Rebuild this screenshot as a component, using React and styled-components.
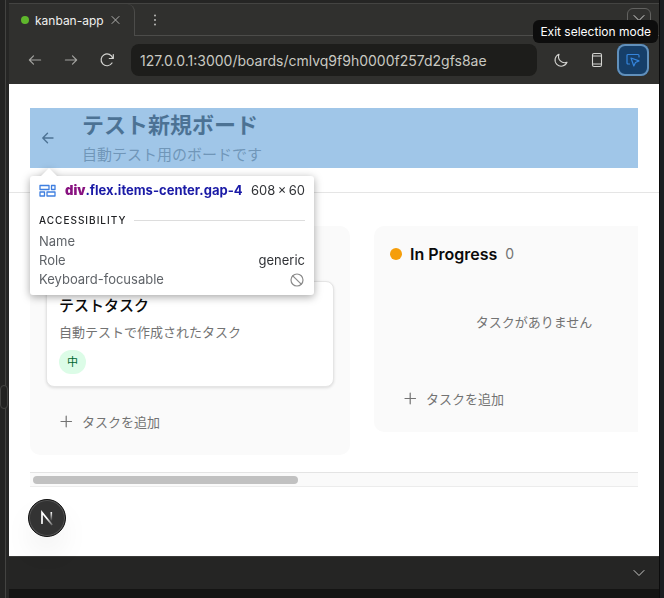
import React from "react";
import styled, { createGlobalStyle } from "styled-components";

const GlobalStyle = createGlobalStyle`
  * {
    box-sizing: border-box;
  }
  body {
    margin: 0;
    background: #252524;
    font-family: Inter, "Noto Sans CJK JP", sans-serif;
  }
  h1, h2, h3, p, dl, dd, dt {
    margin: 0;
  }
  button, input {
    font: inherit;
    border: 0;
    padding: 0;
    background: none;
    color: inherit;
  }
  svg {
    display: block;
    flex: none;
  }
`;

const Icon = ({ size = 16, box = 16, weight = 1, children }) => (
  <svg
    width={size}
    height={size}
    viewBox={`0 0 ${box} ${box}`}
    fill="none"
    stroke="currentColor"
    strokeWidth={weight}
    strokeLinecap="round"
    strokeLinejoin="round"
    aria-hidden="true"
  >
    {children}
  </svg>
);

const ChevronDown = () => (
  <Icon><path d="M3 5.5l5 5 5-5" /></Icon>
);

const Plus = () => (
  <Icon weight={1.2}><path d="M3 8.500h10.500M8.200 3.200v10.600" /></Icon>
);

const columns = [
  {
    id: 1,
    tasks: [{ title: "テストタスク", text: "自動テストで作成されたタスク", priority: "中" }],
  },
  { id: 2, name: "In Progress", color: "#f59e0b", tasks: [] },
];

const Column = ({ name, color, tasks }) => (
  <ColumnBox>
    <ColumnHead>
      {name && (
        <>
          <Dot $size={12} $color={color} />
          <ColumnTitle>{name}</ColumnTitle>
          <Count>{tasks.length}</Count>
        </>
      )}
    </ColumnHead>
    {tasks.map((task) => (
      <Card key={task.title}>
        <CardTitle>{task.title}</CardTitle>
        <CardText>{task.text}</CardText>
        <Priority>{task.priority}</Priority>
      </Card>
    ))}
    {tasks.length === 0 && <Empty>タスクがありません</Empty>}
    <AddButton type="button">
      <Plus />
      タスクを追加
    </AddButton>
  </ColumnBox>
);

const Inspector = () => (
  <InspectorBox>
    <InspectorTop>
      <Icon size={18} box={18} weight={1.3}>
        <path d="M1 3.500h9v4H1zM12.500 3.500H16v4h-3.500zM1 10h4.500v4H1zM8 10h8v4H8z" />
      </Icon>
      <Selector>
        <b>div</b>.flex.items-center.gap-4
      </Selector>
      <Dimensions>608{"\u2009"}×{"\u2009"}60</Dimensions>
    </InspectorTop>
    <InspectorLabel>ACCESSIBILITY</InspectorLabel>
    <Facts>
      <dt>Name</dt>
      <dd />
      <dt>Role</dt>
      <dd>generic</dd>
      <dt>Keyboard-focusable</dt>
      <dd>
        <Icon weight={1.2}>
          <circle cx="8" cy="8" r="6" />
          <path d="M3.800 3.800l8.400 8.400" />
        </Icon>
      </dd>
    </Facts>
  </InspectorBox>
);

const App = () => {
  return (
    <>
      <GlobalStyle />
      <Frame>
        <Gutter><Handle /></Gutter>
        <Pane>
          <TabBar>
            <Tab>
              <Dot $size={8} $color="#5fb72c" />
              <span>kanban-app</span>
              <TabClose type="button" aria-label="Close tab">
                <Icon size={12} box={12}><path d="M2 2.500l7 7M9 2.500l-7 7" /></Icon>
              </TabClose>
            </Tab>
            <TabRest>
              <TabMenu type="button" aria-label="Tab menu">
                <svg width="16" height="16" viewBox="0 0 16 16" fill="currentColor" aria-hidden="true">
                  <circle cx="8" cy="3.500" r="0.900" />
                  <circle cx="8" cy="8" r="0.900" />
                  <circle cx="8" cy="12.500" r="0.900" />
                </svg>
              </TabMenu>
              <MoreButton type="button" aria-label="More">
                <ChevronDown />
              </MoreButton>
            </TabRest>
          </TabBar>

          <NavBar>
            <ToolButton type="button" aria-label="Back" $dim>
              <Icon weight={1.2}><path d="M13.600 8H2.600M6.500 3.900L2.400 8l4.100 4.100" /></Icon>
            </ToolButton>
            <ToolButton type="button" aria-label="Forward" $dim>
              <Icon weight={1.2}><path d="M2.400 8h11M9.500 3.900L13.600 8l-4.100 4.100" /></Icon>
            </ToolButton>
            <ToolButton type="button" aria-label="Reload">
              <Icon weight={1.2}><path d="M13.700 6.300A5.900 5.900 0 1 0 13 11M14.300 2.500v4h-4" /></Icon>
            </ToolButton>
            <Address aria-label="Address" defaultValue="127.0.0.1:3000/boards/cmlvq9f9h0000f257d2gfs8ae" />
            <ToolButton type="button" aria-label="Dark mode">
              <Icon weight={1.1}><path d="M6 2.200a6.200 6.200 0 1 0 8 8.100A6.200 6.200 0 0 1 6 2.200z" /></Icon>
            </ToolButton>
            <ToolButton type="button" aria-label="Device size">
              <Icon weight={1.1}>
                <rect x="3.500" y="1.500" width="9" height="13" rx="1.500" />
                <path d="M3.500 4h9M3.500 12h9" />
              </Icon>
            </ToolButton>
            <ToolButton type="button" aria-label="Selection" $active>
              <Icon weight={1.2}>
                <path d="M4.500 12H3a1 1 0 0 1-1-1V3.500a1 1 0 0 1 1-1h10a1 1 0 0 1 1 1V5M6 6l2.800 8 1.700-3.500L14 8.900z" />
              </Icon>
            </ToolButton>
            <Hint role="tooltip">Exit selection mode</Hint>
          </NavBar>

          <Page>
            <PageHeader>
              <Picked>
                <BackLink href="#boards" aria-label="Back to boards">
                  <Icon weight={1.4}><path d="M13 8H3M7.500 3.300L2.800 8l4.700 4.700" /></Icon>
                </BackLink>
                <div>
                  <BoardTitle>テスト新規ボード</BoardTitle>
                  <BoardText>自動テスト用のボードです</BoardText>
                </div>
                <Inspector />
              </Picked>
            </PageHeader>
            <Board>
              <Columns>
                {columns.map((column) => (
                  <Column key={column.id} {...column} />
                ))}
              </Columns>
              <Track><Thumb /></Track>
            </Board>
            <DevBadge type="button" aria-label="Dev tools">
              <svg width="20" height="20" viewBox="0 0 20 20" fill="none" aria-hidden="true">
                <defs>
                  <linearGradient id="stem" x1="0" y1="4" x2="0" y2="13" gradientUnits="userSpaceOnUse">
                    <stop stopColor="#fff" />
                    <stop offset="1" stopColor="#fff" stopOpacity="0" />
                  </linearGradient>
                  <linearGradient id="slash" x1="10" y1="10" x2="16" y2="17" gradientUnits="userSpaceOnUse">
                    <stop stopColor="#fff" />
                    <stop offset="1" stopColor="#fff" stopOpacity="0.200" />
                  </linearGradient>
                </defs>
                <path d="M5 16V4.500L15.200 17" stroke="url(#slash)" strokeWidth="1.700" />
                <rect x="13.500" y="4" width="1.600" height="10" fill="url(#stem)" />
              </svg>
            </DevBadge>
          </Page>

          <BottomBar>
            <BottomToggle type="button" aria-label="Toggle panel"><ChevronDown /></BottomToggle>
          </BottomBar>
          <BottomStrip />
        </Pane>
        <Edge />
      </Frame>
    </>
  );
};

const Frame = styled.div`
  display: flex;
  min-height: 100vh;
`;

const Gutter = styled.div`
  flex: none;
  display: flex;
  align-items: center;
  width: 9px;
  padding-top: 196px;
  background: linear-gradient(90deg, #232322 5px, #434341 5px, #434341 6px, #262625 6px);
`;

const Handle = styled.div`
  width: 8px;
  height: 24px;
  border: 1px solid #454543;
  border-radius: 4px;
  background: #222221;
`;

const Edge = styled.div`
  flex: none;
  width: 5px;
  background: #1b1d21;
  border-left: 1px solid #0c0c0c;
`;

const Pane = styled.div`
  flex: 1;
  min-width: 0;
  display: flex;
  flex-direction: column;
  padding-top: 3px;
  background: #252524;
`;

const Dot = styled.span`
  flex: none;
  width: ${({ $size }) => $size}px;
  height: ${({ $size }) => $size}px;
  border-radius: 50%;
  background: ${({ $color }) => $color};
`;

const TabBar = styled.div`
  display: flex;
  height: 33px;
  border-top: 1px solid #444442;
  background: #30302e;
  font-size: 12px;
  color: #f0f0ee;
`;

const Tab = styled.div`
  display: flex;
  align-items: center;
  gap: 6px;
  padding: 0 12px;
  border-right: 1px solid #4c4c4a;
  border-top-right-radius: 8px;
`;

const TabClose = styled.button`
  color: #b0b0ae;
`;

const TabRest = styled.div`
  flex: 1;
  display: flex;
  align-items: center;
  justify-content: space-between;
  padding: 0 8px 0 12px;
  border-bottom: 1px solid #4c4c4a;
`;

const TabMenu = styled.button`
  color: #c8c8c6;
`;

const MoreButton = styled.button`
  display: grid;
  place-items: center;
  width: 24px;
  height: 24px;
  padding-bottom: 4px;
  border: 1px solid #626260;
  border-radius: 6px;
  color: #d8d8d6;
`;

const NavBar = styled.div`
  position: relative;
  display: flex;
  align-items: center;
  gap: 4px;
  height: 48px;
  padding: 0 10px;
  background: #30302e;
`;

const ToolButton = styled.button`
  flex: none;
  display: grid;
  place-items: center;
  width: 32px;
  height: 32px;
  border-radius: 8px;
  color: ${({ $dim, $active }) => ($active ? "#3585dc" : $dim ? "#a2a29f" : "#d4d4d1")};
  background: ${({ $active }) => ($active ? "#163f69" : "none")};
  box-shadow: ${({ $active }) => ($active ? "inset 0 0 0 2px #6190bb" : "none")};
`;

const Address = styled.input`
  flex: 1;
  min-width: 0;
  height: 32px;
  margin: 0 4px;
  padding: 0 9px;
  border-radius: 8px;
  background: #1d1d1b;
  color: #c9c9c2;
  font-size: 14px;
`;

const Hint = styled.div`
  position: absolute;
  right: 1px;
  bottom: 41px;
  padding: 0 7px;
  border-radius: 6px;
  background: #0d0d0d;
  color: #fff;
  font-size: 12px;
  line-height: 23px;
`;

const Page = styled.main`
  flex: 1;
  position: relative;
  background: #fff;
  color: #0a0a0a;
`;

const PageHeader = styled.header`
  padding: 24px 21px;
  border-bottom: 1px solid #e5e5e5;
`;

const Picked = styled.div`
  position: relative;
  display: flex;
  align-items: center;
  gap: 16px;
  height: 60px;

  &::after {
    content: "";
    position: absolute;
    inset: 0;
    background: rgba(111, 168, 220, 0.66);
  }
`;

const BackLink = styled.a`
  display: grid;
  place-items: center;
  width: 36px;
  height: 36px;
  color: inherit;
`;

const BoardTitle = styled.h1`
  font-size: 22px;
  font-weight: 700;
  line-height: 34px;
`;

const BoardText = styled.p`
  font-size: 15px;
  line-height: 26px;
  color: #737373;
`;

const InspectorBox = styled.div`
  position: absolute;
  z-index: 2;
  top: 68px;
  left: 0;
  width: 284px;
  padding: 5px 9px 6px;
  border-radius: 3px;
  background: #fff;
  filter: drop-shadow(0 2px 4px rgba(0, 0, 0, 0.35));
  font-size: 13px;
  line-height: 19px;

  &::before {
    content: "";
    position: absolute;
    left: 11px;
    bottom: 100%;
    border: 8px solid transparent;
    border-top-width: 0;
    border-bottom-color: #fff;
  }
`;

const InspectorTop = styled.div`
  display: flex;
  align-items: center;
  gap: 8px;
  color: #303236;

  svg {
    color: #3f7fe0;
  }
`;

const Selector = styled.span`
  flex: 1;
  white-space: nowrap;
  font-weight: 700;
  color: #1a1aa6;

  b {
    color: #881280;
  }
`;

const Dimensions = styled.span`
  white-space: nowrap;
`;

const InspectorLabel = styled.div`
  display: flex;
  align-items: center;
  gap: 8px;
  margin: 11px 0 2px;
  font-size: 10px;
  font-weight: 500;
  letter-spacing: 1px;
  color: #202124;

  &::after {
    content: "";
    flex: 1;
    border-top: 1px solid #dddddd;
  }
`;

const Facts = styled.dl`
  display: grid;
  grid-template-columns: 1fr auto;
  grid-auto-rows: 19px;
  align-items: center;
  color: #5f6368;

  dd {
    justify-self: end;
    color: #303236;
  }
  svg {
    color: #8a8a8a;
  }
`;

const Board = styled.section`
  padding: 33px 21px 0;
`;

const Columns = styled.div`
  display: flex;
  align-items: flex-start;
  gap: 24px;
  padding-bottom: 17px;
  overflow: hidden;
`;

const ColumnBox = styled.section`
  flex: none;
  width: 320px;
  display: flex;
  flex-direction: column;
  gap: 16px;
  padding: 16px;
  border-radius: 10px;
  background: #fafafa;
`;

const ColumnHead = styled.div`
  display: flex;
  align-items: center;
  gap: 8px;
  height: 23px;
`;

const ColumnTitle = styled.h2`
  font-size: 16px;
  font-weight: 600;
  line-height: 22px;
`;

const Count = styled.span`
  font-size: 14px;
  line-height: 22px;
  color: #737373;
`;

const Card = styled.article`
  padding: 12px;
  border: 1px solid #e5e5e5;
  border-radius: 8px;
  background: #fff;
  box-shadow: 0 1px 3px rgba(0, 0, 0, 0.12);
`;

const CardTitle = styled.h3`
  font-size: 15px;
  font-weight: 500;
  line-height: 24px;
`;

const CardText = styled.p`
  margin: 4px 0 8px;
  font-size: 13px;
  line-height: 20px;
  color: #737373;
`;

const Priority = styled.span`
  display: block;
  width: fit-content;
  padding: 0 8px;
  border-radius: 12px;
  background: #dcfce7;
  color: #016630;
  font-size: 11px;
  line-height: 24px;
`;

const Empty = styled.p`
  padding: 30px 0;
  text-align: center;
  font-size: 13px;
  line-height: 23px;
  color: #737373;
`;

const AddButton = styled.button`
  display: flex;
  align-items: center;
  gap: 8px;
  height: 36px;
  padding: 0 12px;
  font-size: 13px;
  color: #737373;
`;

const Track = styled.div`
  height: 15px;
  padding: 3px;
  border-top: 1px solid #e4e4e4;
  border-bottom: 1px solid #ececec;
  background: #fafafa;
`;

const Thumb = styled.div`
  width: 44%;
  height: 8px;
  border-radius: 4px;
  background: #c1c1c1;
`;

const DevBadge = styled.button`
  position: absolute;
  left: 19px;
  bottom: 19px;
  display: grid;
  place-items: center;
  width: 38px;
  height: 38px;
  border: 1px solid #111;
  border-radius: 50%;
  background: #333;
  box-shadow: inset 0 0 0 1px #555, 0 16px 32px -8px rgba(0, 0, 0, 0.15);
`;

const BottomBar = styled.footer`
  display: flex;
  align-items: center;
  justify-content: flex-end;
  height: 33px;
  padding: 0 12px;
  border-top: 1px solid #3a3a38;
`;

const BottomToggle = styled.button`
  color: #c8c8c6;
`;

const BottomStrip = styled.div`
  height: 9px;
  background: #141413;
`;

export default App;
